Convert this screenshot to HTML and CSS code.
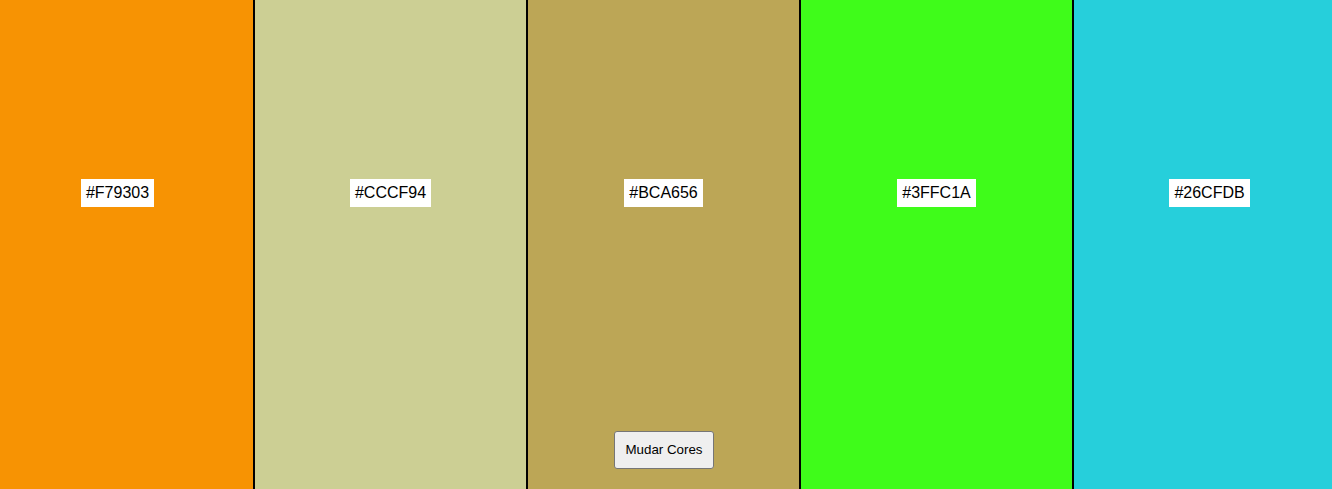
FILE: index.html
```html
<!DOCTYPE html>
<html lang="pt">
<head>
<meta charset="utf-8">
<title>Paleta de Cores</title>
<link rel="stylesheet" href="styles.css">
</head>
<body>
<div class="palette">
  <div class="color c1"><div class="label-area"><span class="label">#F79303</span></div><div class="foot"></div></div>
  <div class="color c2"><div class="label-area"><span class="label">#CCCF94</span></div><div class="foot"></div></div>
  <div class="color c3"><div class="label-area"><span class="label">#BCA656</span></div><div class="foot"><button class="btn">Mudar Cores</button></div></div>
  <div class="color c4"><div class="label-area"><span class="label">#3FFC1A</span></div><div class="foot"></div></div>
  <div class="color c5"><div class="label-area"><span class="label">#26CFDB</span></div><div class="foot"></div></div>
</div>
</body>
</html>
```
FILE: styles.css
```css
html, body {
  margin: 0;
  padding: 0;
  height: 100%;
  overflow: hidden;
}
body {
  font-family: "Liberation Sans", Arial, sans-serif;
}
.palette {
  display: flex;
  height: 489px;
  margin-left: -19px;
  width: 1365px;
}
.color {
  box-sizing: border-box;
  width: 273px;
  flex: 0 0 273px;
  height: 489px;
  border-left: 1px solid #000;
  border-right: 1px solid #000;
  display: flex;
  flex-direction: column;
}
.c1 { background: #F79303; }
.c2 { background: #CCCF94; }
.c3 { background: #BCA656; }
.c4 { background: #3FFC1A; }
.c5 { background: #26CFDB; }
.label-area {
  flex: 0 0 386px;
  display: flex;
  align-items: center;
  justify-content: center;
}
.label {
  background: #fff;
  color: #000;
  font-size: 16px;
  line-height: 18px;
  padding: 5px;
}
.foot {
  flex: 1;
  display: flex;
  justify-content: center;
  align-items: flex-start;
  padding-top: 45px;
}
.btn {
  font-family: "Liberation Sans", Arial, sans-serif;
  font-size: 13.33px;
  line-height: 16px;
  padding: 10px 10px;
  height: 38px;
  width: 100px;
  box-sizing: border-box;
  background: #efefef;
  color: #000;
  border: 1px solid #767676;
  border-radius: 3px;
  margin-left: 1px;
}
```
